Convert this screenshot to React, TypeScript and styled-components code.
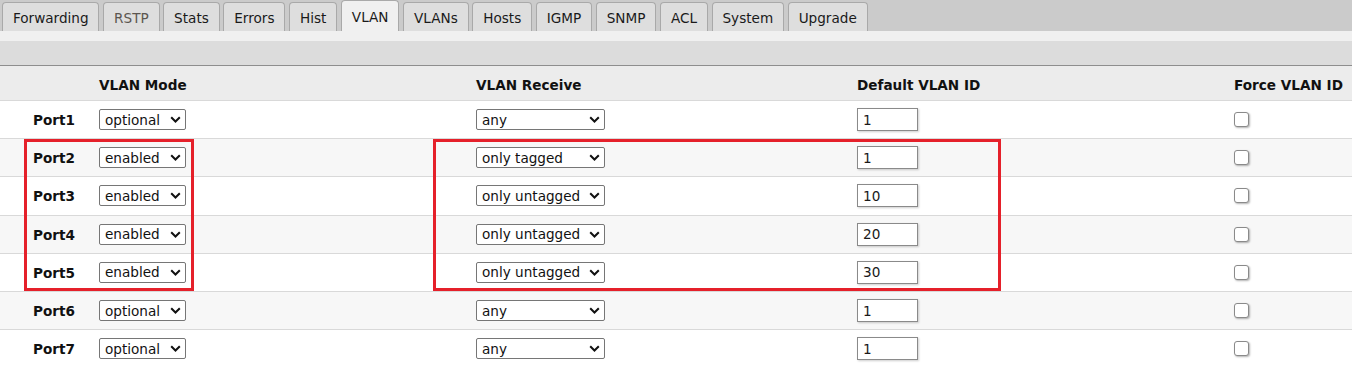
import { FC } from 'react'
import styled, { createGlobalStyle } from 'styled-components'

const GlobalStyle = createGlobalStyle`
    body {
        margin: 0;
        background: #fff;
        font-family: "DejaVu Sans", Verdana, sans-serif;
        font-size: 13.6px;
        color: #111;
        overflow: hidden;
    }
`

const TabBar = styled.div`
    display: flex;
    align-items: flex-end;
    height: 31px;
    background-color: #cbcbcb;
    padding-left: 2px;
`

type TabProps = {
    active?: boolean
    muted?: boolean
}

const Tab = styled.div<TabProps>`
    display: flex;
    align-items: center;
    box-sizing: border-box;
    margin-right: 3.7px;
    padding: 0 9.9px;
    border: 1px solid #a9a9a9;
    border-bottom: none;
    border-radius: 4px 4px 0 0;
    white-space: nowrap;
    ${({ active, muted }) => `
        height: ${active ? 31 : 29}px;
        padding-top: ${active ? 2 : 1}px;
        background-color: ${active ? '#f0f0f0' : '#dedede'};
        color: ${muted ? '#5c5650' : '#1a1a1a'};
    `}
`

const Strip = styled.div`
    height: 10px;
    background-color: #f0f0f0;
`

const Band = styled.div`
    height: 24px;
    background-color: #dcdcdc;
    border-bottom: 1px solid #8e8e8e;
`

const Table = styled.div`
    position: relative;
`

type RowProps = {
    striped?: boolean
}

const Row = styled.div<RowProps>`
    display: grid;
    grid-template-columns: 99px 377px 381px 377px 378px;
    align-items: center;
    box-sizing: border-box;
    height: 38.2px;
    border-bottom: 1px solid #d9d9d9;
    background-color: ${({ striped }) => (striped ? '#f7f7f7' : '#fff')};
`

const HeaderRow = styled(Row)`
    height: 35px;
    padding-top: 3px;
    background-color: #ececec;
    font-weight: bold;
`

const PortLabel = styled.div`
    padding-left: 33px;
    padding-top: 1px;
    font-weight: bold;
`

const SelectWrap = styled.span`
    position: relative;
    display: inline-block;
    vertical-align: middle;
`

const Select = styled.select<{ wide?: boolean }>`
    appearance: none;
    display: block;
    box-sizing: border-box;
    width: ${({ wide }) => (wide ? 129 : 87)}px;
    height: 21px;
    margin: 0;
    padding: 0 0 0 5px;
    border: 1px solid #767676;
    border-radius: 2px;
    background-color: #fff;
    font-family: "DejaVu Sans", Verdana, sans-serif;
    font-size: 13.6px;
    color: #111;
`

const Chevron = styled.svg`
    position: absolute;
    right: 5px;
    top: 7px;
    width: 11px;
    height: 7px;
    pointer-events: none;
`

const IdInput = styled.input`
    box-sizing: border-box;
    width: 61px;
    height: 23px;
    margin: 0;
    padding: 0 5px;
    border: 1px solid #8a8a8a;
    box-shadow: 1px 1px 2px rgba(0, 0, 0, 0.2);
    font-family: "DejaVu Sans", Verdana, sans-serif;
    font-size: 13.6px;
    color: #1a1a1a;
`

const Check = styled.input`
    appearance: none;
    display: block;
    margin: 0;
    width: 15px;
    height: 15px;
    border: 1px solid #8a8a8a;
    border-radius: 3px;
    background: #fff;
    box-shadow: 1px 1px 2px rgba(0, 0, 0, 0.3);
`

type BoxProps = {
    left: number
    width: number
}

const Highlight = styled.div<BoxProps>`
    position: absolute;
    top: 73px;
    height: 152px;
    box-sizing: border-box;
    border: 3px solid #e5202a;
    pointer-events: none;
    ${({ left, width }) => `
        left: ${left}px;
        width: ${width}px;
    `}
`

const tabs = ['Forwarding', 'RSTP', 'Stats', 'Errors', 'Hist', 'VLAN', 'VLANs', 'Hosts', 'IGMP', 'SNMP', 'ACL', 'System', 'Upgrade']

const ports = [
    { mode: 'optional', receive: 'any', id: '1' },
    { mode: 'enabled', receive: 'only tagged', id: '1' },
    { mode: 'enabled', receive: 'only untagged', id: '10' },
    { mode: 'enabled', receive: 'only untagged', id: '20' },
    { mode: 'enabled', receive: 'only untagged', id: '30' },
    { mode: 'optional', receive: 'any', id: '1' },
    { mode: 'optional', receive: 'any', id: '1' },
]

type DropdownProps = {
    value: string
    options: string[]
    wide?: boolean
}

const Dropdown: FC<DropdownProps> = ({ value, options, wide }) => (
    <SelectWrap>
        <Select wide={wide} defaultValue={value}>
            {options.map(o => <option key={o}>{o}</option>)}
        </Select>
        <Chevron viewBox="0 0 11 7">
            <path d="M1.2 1.2 L5.5 5.5 L9.8 1.2" fill="none" stroke="#111" strokeWidth="2" />
        </Chevron>
    </SelectWrap>
)

const App: FC = () => {
    return (
        <>
            <GlobalStyle />
            <TabBar>
                {tabs.map(tab => (
                    <Tab key={tab} active={tab === 'VLAN'} muted={tab === 'RSTP'}>
                        {tab}
                    </Tab>
                ))}
            </TabBar>
            <Strip />
            <Band />
            <Table>
                <HeaderRow>
                    <div />
                    <div>VLAN Mode</div>
                    <div>VLAN Receive</div>
                    <div>Default VLAN ID</div>
                    <div>Force VLAN ID</div>
                </HeaderRow>
                {ports.map((port, i) => (
                    <Row key={i} striped={i % 2 === 1}>
                        <PortLabel>Port{i + 1}</PortLabel>
                        <div>
                            <Dropdown value={port.mode} options={['disabled', 'optional', 'enabled', 'strict']} />
                        </div>
                        <div>
                            <Dropdown wide value={port.receive} options={['any', 'only tagged', 'only untagged']} />
                        </div>
                        <div>
                            <IdInput defaultValue={port.id} />
                        </div>
                        <div>
                            <Check type="checkbox" />
                        </div>
                    </Row>
                ))}
                <Highlight left={24} width={170} />
                <Highlight left={433} width={568} />
            </Table>
        </>
    )
}

export default App
